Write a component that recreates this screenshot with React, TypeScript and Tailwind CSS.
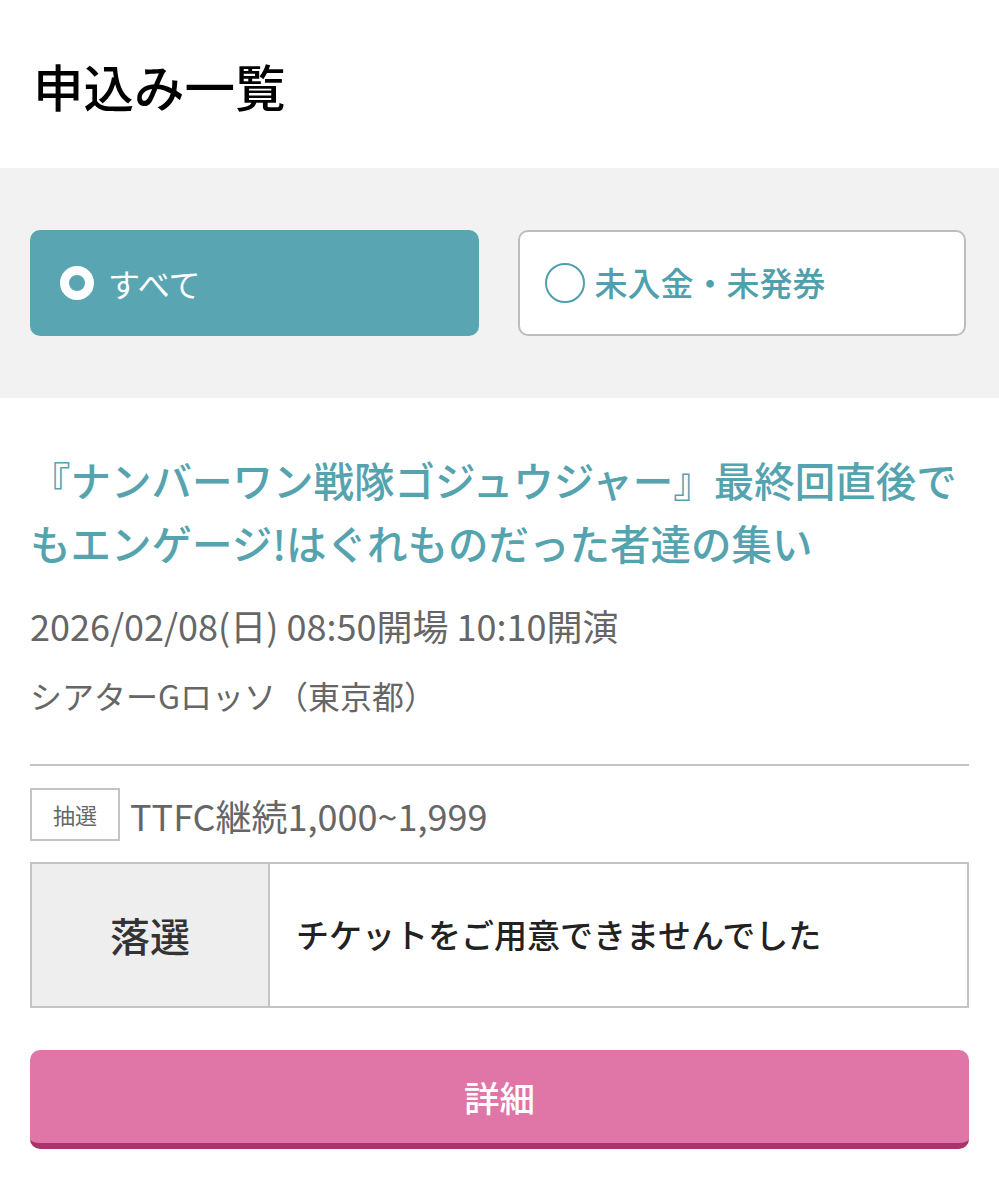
import React from 'react';

const App: React.FC = () => {
  return (
    <div className="min-h-[1200px] bg-white font-['Noto_Sans_CJK_JP',_'Noto_Sans',_sans-serif]">
      <h1 className="px-[33px] pt-[50px] pb-[47px] text-[50.5px] font-medium leading-[71px] text-black">
        申込み一覧
      </h1>

      <div className="bg-[#f2f2f2] pl-[30px] pr-[33px] py-[62px]">
        <div className="grid grid-cols-2 gap-[39px]">
          <button className="flex h-[106px] items-center gap-[14px] rounded-[10px] bg-[#59a6b2] px-[30px] text-left">
            <span className="h-[34px] w-[34px] rounded-full border-[9px] border-white" />
            <span className="text-[32px] text-white">すべて</span>
          </button>
          <button className="flex h-[106px] items-center gap-[10px] rounded-[10px] border-2 border-[#bdbdbd] bg-white px-[25px] text-left">
            <span className="h-[40px] w-[40px] rounded-full border-2 border-[#4f9fac]" />
            <span className="text-[33px] font-medium text-[#4f9fac]">未入金・未発券</span>
          </button>
        </div>
      </div>

      <div className="px-[30px] pt-[50px]">
        <h2 className="text-[40.5px] font-medium leading-[63px] text-[#55a3af]">
          『ナンバーワン戦隊ゴジュウジャー』最終回直後でもエンゲージ!はぐれものだった者達の集い
        </h2>
        <p className="mt-[29px] text-[36px] leading-[44px] text-[#666666]">
          2026/02/08(日) 08:50開場 10:10開演
        </p>
        <p className="mt-[26px] text-[32px] leading-[44px] text-[#666666]">
          シアターGロッソ（東京都）
        </p>

        <div className="mt-[47px] border-t-2 border-[#c4c4c4]" />

        <div className="mt-[22px] flex items-center gap-[10px]">
          <span className="flex h-[53px] w-[90px] items-center justify-center border-2 border-[#c4c4c4] text-[22px] text-[#666666]">
            抽選
          </span>
          <span className="text-[36px] leading-[44px] text-[#666666]">TTFC継続1,000~1,999</span>
        </div>

        <div className="mt-[21px] flex h-[146px] border-2 border-[#c4c4c4]">
          <div className="flex w-[238px] items-center justify-center border-r-2 border-[#c4c4c4] bg-[#eeeeee] text-[40px] font-medium text-[#333333]">
            落選
          </div>
          <div className="flex flex-1 items-center bg-white pl-[26px] text-[33px] font-medium text-[#222222]">
            チケットをご用意できませんでした
          </div>
        </div>

        <button className="mt-[42px] flex h-[99px] w-full items-center justify-center rounded-[10px] border-b-[6px] border-[#a9336b] bg-[#e075a7] text-[35.5px] font-medium text-white">
          詳細
        </button>
      </div>
    </div>
  );
};

export default App;
